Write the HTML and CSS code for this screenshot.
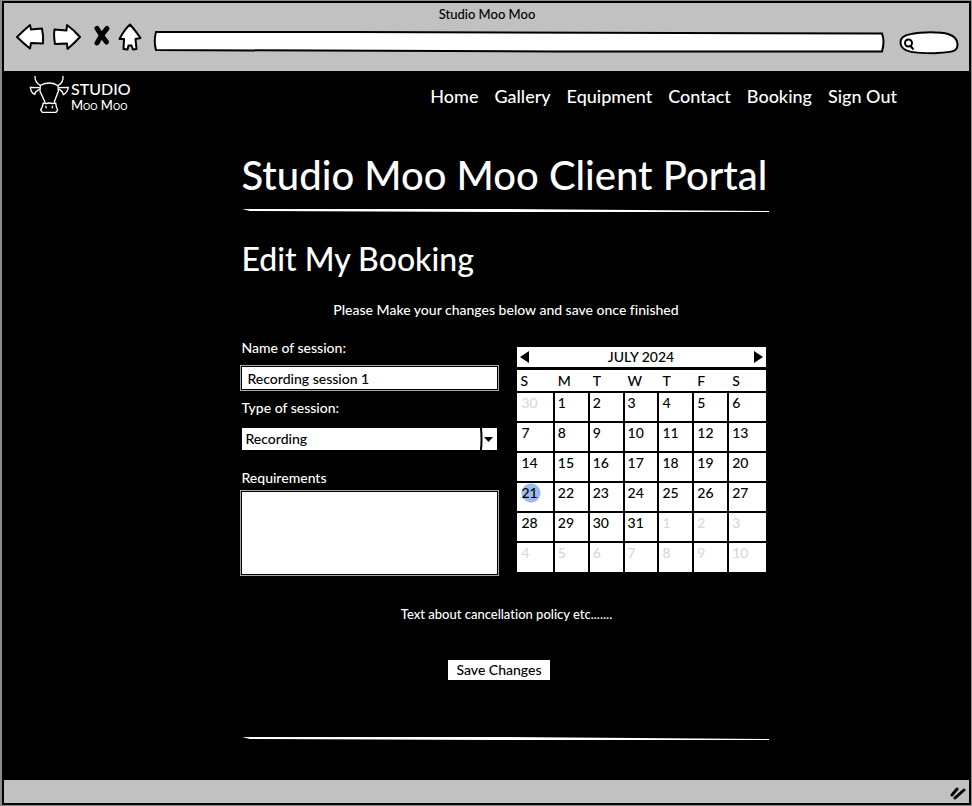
FILE: index.html
```html
<!DOCTYPE html>
<html lang="en">
<head>
<meta charset="utf-8">
<title>Studio Moo Moo</title>
<meta name="viewport" content="width=device-width, initial-scale=1">
<link rel="stylesheet" href="styles.css">
</head>
<body>
<div class="window">
  <header class="chrome">
    <p class="chrome-title">Studio Moo Moo</p>
    <div class="toolbar">
      <button class="tool" type="button" aria-label="Back">
        <svg width="30" height="28" viewBox="0 0 30 28"><path d="M2 14 Q8 8 15 2 L16 6.500 L27 5.500 Q28.500 12 28 20.500 L16 20 L15 25.500 Q8 20 2 14Z"/></svg>
      </button>
      <button class="tool tool-forward" type="button" aria-label="Forward">
        <svg width="30" height="28" viewBox="0 0 30 28"><path d="M28 14 Q22 7 15 2 L14.500 7.500 L2.500 6.500 Q1.500 12 3 21 L15 20.500 L15.500 26 Q22 20.500 28 14Z"/></svg>
      </button>
      <button class="tool tool-stop" type="button" aria-label="Stop">
        <svg width="18" height="28" viewBox="0 0 18 28"><path class="cross" d="M4 5.500 Q8 12 13.500 19 M14 5.500 Q8 12 4 20"/></svg>
      </button>
      <button class="tool tool-home" type="button" aria-label="Home page">
        <svg width="24" height="28" viewBox="0 0 24 28"><path d="M12 1.500 Q17 7 22.500 15 L17.500 16 L18.500 26 L15 26.500 L13.500 22.500 L10.500 22.500 L9.500 26.500 L5.500 26 L6 16 L1.500 16 Q6 7 12 1.500Z"/></svg>
      </button>
      <div class="address">
        <svg class="sketch" viewBox="0 0 732 22" preserveAspectRatio="none"><path d="M2 1 L200 1 L729 2.500 Q732 10 729 20.500 L400 20.500 L2 19 Q-0.500 10 2 1Z"/></svg>
        <input type="text" aria-label="Address">
      </div>
      <div class="search">
        <svg class="sketch" viewBox="0 0 60 26" preserveAspectRatio="none"><path d="M1.500 13 C1 6 8 2 27 1.500 C46 1 58 3 58.500 14 C59 23 53 23 36 24 C18 24 2 24 1.500 13Z"/></svg>
        <svg class="lens" width="12" height="13" viewBox="0 0 12 13"><circle cx="5.500" cy="5" r="3.500"/><path d="M7.500 8 L10.500 11.500"/></svg>
        <input type="search" aria-label="Search">
      </div>
    </div>
  </header>

  <div class="page">
    <div class="topbar">
      <a class="logo" href="#">
        <svg class="cow" width="42" height="40" viewBox="84 222 126 120" aria-hidden="true">
          <path d="M105 228 Q104 248 121 256 Q135 249 149 249 Q163 249 174 257 Q191 248 189 228"/>
          <path d="M119 263 L91 262 Q93 279 104 283 L107 276 L119 267 M176 263 L205 262 Q202 278 190 284 L187 276 L177 267"/>
          <path d="M121 256 L120 274 L136 308 M174 257 L175 274 L162 308"/>
          <path d="M138 311 L130 309 Q127 323 122 330 L127 337 L168 337 L173 330 Q168 321 167 309 L159 311 Q148 307 138 311Z"/>
          <path d="M137 318 L139 325 M158 318 L156 325"/>
        </svg>
        <span class="wordmark"><span class="word-top">STUDIO</span><span class="word-bottom">Moo Moo</span></span>
      </a>
      <nav class="nav">
        <a href="#">Home</a>
        <a href="#">Gallery</a>
        <a href="#">Equipment</a>
        <a href="#">Contact</a>
        <a href="#">Booking</a>
        <a href="#">Sign Out</a>
      </nav>
    </div>

    <main class="content">
      <h1>Studio Moo Moo Client Portal</h1>
      <svg class="rule" viewBox="0 0 527 5" preserveAspectRatio="none" aria-hidden="true"><path d="M0 1 L260 1 L527 3 L527 4 L250 4 L8 3Z"/></svg>
      <h2>Edit My Booking</h2>
      <p class="intro">Please Make your changes below and save once finished</p>

      <form>
        <div class="columns">
          <div class="fields">
            <label for="name">Name of session:</label>
            <input class="box" id="name" type="text" value="Recording session 1">
            <label for="type">Type of session:</label>
            <div class="picker">
              <select id="type"><option>Recording</option></select>
              <svg width="16" height="22" viewBox="0 0 16 22" aria-hidden="true"><path class="divider" d="M1 0 Q2 11 1 22"/><path d="M4 9 L13 9 L8.500 14Z"/></svg>
            </div>
            <label for="notes">Requirements</label>
            <textarea class="box" id="notes"></textarea>
          </div>

          <section class="calendar" aria-label="Booking date">
            <div class="month">
              <button type="button" aria-label="Previous month"><svg width="10" height="12" viewBox="0 0 10 12"><path d="M10 0 V12 L1 6Z"/></svg></button>
              <span>JULY 2024</span>
              <button type="button" aria-label="Next month"><svg width="10" height="12" viewBox="0 0 10 12"><path d="M0 0 V12 L9 6Z"/></svg></button>
            </div>
            <table>
              <thead><tr><th>S</th><th>M</th><th>T</th><th>W</th><th>T</th><th>F</th><th>S</th></tr></thead>
              <tbody>
                <tr><td class="out">30</td><td>1</td><td>2</td><td>3</td><td>4</td><td>5</td><td>6</td></tr>
                <tr><td>7</td><td>8</td><td>9</td><td>10</td><td>11</td><td>12</td><td>13</td></tr>
                <tr><td>14</td><td>15</td><td>16</td><td>17</td><td>18</td><td>19</td><td>20</td></tr>
                <tr><td class="today">21</td><td>22</td><td>23</td><td>24</td><td>25</td><td>26</td><td>27</td></tr>
                <tr><td>28</td><td>29</td><td>30</td><td>31</td><td class="out">1</td><td class="out">2</td><td class="out">3</td></tr>
                <tr><td class="out">4</td><td class="out">5</td><td class="out">6</td><td class="out">7</td><td class="out">8</td><td class="out">9</td><td class="out">10</td></tr>
              </tbody>
            </table>
          </section>
        </div>
        <p class="policy">Text about cancellation policy etc.......</p>
        <div class="actions">
          <button class="save" type="submit">Save Changes</button>
        </div>
      </form>
      <svg class="rule" viewBox="0 0 527 5" preserveAspectRatio="none" aria-hidden="true"><path d="M0 1 L260 1 L527 3 L527 4 L250 4 L8 3Z"/></svg>
    </main>
  </div>

  <footer class="statusbar">
    <svg width="18" height="14" viewBox="0 0 18 14" aria-hidden="true"><path d="M3 9 L8 3 M6 12 L15 4"/></svg>
  </footer>
</div>
</body>
</html>
```

FILE: styles.css
```css
* {
  box-sizing: border-box;
}

body {
  margin: 0;
  min-height: 100vh;
  display: flex;
  padding: 1px 1px 1px 2px;
  background: #8c8c8c;
  color: #fff;
  font: 14px/18px Lato, "Liberation Sans", sans-serif;
  font-weight: 500;
  font-variant-ligatures: none;
}

h1, h2, p {
  margin: 0;
  font-weight: 500;
}

button, input, select, textarea {
  margin: 0;
  padding: 0;
  border: 0;
  border-radius: 0;
  background: none;
  color: #000;
  font: inherit;
}

svg {
  display: block;
}

a {
  color: inherit;
  text-decoration: none;
}

.window {
  flex: 1;
  display: flex;
  flex-direction: column;
  border: 2px solid #000;
  background: #000;
}

/* Browser chrome */
.chrome {
  height: 68px;
  padding: 2px 10px 0 11px;
  background: #c1c1c1;
  color: #000;
}

.chrome-title {
  font-size: 13px;
  text-align: center;
}

.toolbar {
  display: flex;
  align-items: flex-start;
}

.tool path {
  fill: #fff;
  stroke: #000;
  stroke-width: 2;
  stroke-linejoin: round;
}

.tool .cross {
  fill: none;
  stroke-width: 5;
  stroke-linecap: round;
}

.tool-forward {
  margin-left: 7px;
}

.tool-stop {
  margin-left: 11px;
}

.tool-home {
  margin-left: 7px;
}

.address,
.search {
  position: relative;
  margin-top: 8px;
}

.address {
  flex: 1;
  height: 22px;
  margin-left: 12px;
}

.search {
  width: 60px;
  height: 24px;
  margin-left: 14px;
}

.address input,
.search input {
  position: relative;
  width: 100%;
  height: 100%;
  padding: 0 8px;
}

.search input {
  padding-left: 18px;
}

.sketch {
  position: absolute;
  inset: 0;
  width: 100%;
  height: 100%;
  overflow: visible;
}

.sketch path {
  fill: #fff;
  stroke: #000;
  stroke-width: 2;
  vector-effect: non-scaling-stroke;
}

.lens {
  position: absolute;
  left: 4px;
  top: 7px;
  fill: none;
  stroke: #000;
  stroke-width: 2;
}

/* Site header */
.page {
  flex: 1;
  padding-bottom: 32px;
}

.topbar {
  display: flex;
  justify-content: space-between;
  padding: 3px 72px 0 24px;
}

.logo {
  display: flex;
}

.cow {
  fill: none;
  stroke: #fff;
  stroke-width: 4;
}

.wordmark {
  display: flex;
  flex-direction: column;
  padding: 6px 0 0 1px;
}

.word-top {
  font-size: 16px;
  line-height: 18px;
}

.word-bottom {
  font-size: 13px;
  line-height: 14px;
  font-variant-caps: small-caps;
}

.nav {
  display: flex;
  gap: 16px;
  padding-top: 10px;
  font-size: 18px;
  line-height: 24px;
}

/* Portal content */
.content {
  width: 527px;
  max-width: 100%;
  margin: 0 auto;
}

.content h1 {
  margin-top: 37px;
  font-size: 40px;
  line-height: 48px;
  white-space: nowrap;
}

.rule {
  width: 100%;
  height: 5px;
  margin-top: 9px;
  fill: #fff;
}

.content h2 {
  margin-top: 24px;
  font-size: 32px;
  line-height: 44px;
}

.intro {
  margin-top: 20px;
  padding-left: 2px;
  text-align: center;
}

.columns {
  display: grid;
  grid-template-columns: 255fr 249fr;
  gap: 20px;
  margin-top: 20px;
  padding-right: 3px;
}

.fields {
  display: flex;
  flex-direction: column;
}

.box {
  background: #fff;
  outline: 1px solid #aaa;
  outline-offset: 1px;
}

input.box {
  height: 22px;
  margin: 10px 0;
  padding: 0 6px;
}

textarea.box {
  height: 82px;
  margin-top: 5px;
  padding: 4px 6px;
  resize: none;
}

.picker {
  position: relative;
  height: 22px;
  margin: 11px 0 19px;
}

.picker select {
  display: block;
  width: 100%;
  height: 100%;
  padding: 0 20px 0 4px;
  background: #fff;
  appearance: none;
}

.picker svg {
  position: absolute;
  top: 0;
  right: 1px;
  pointer-events: none;
}

.picker .divider {
  fill: none;
  stroke: #000;
  stroke-width: 2;
}

/* Calendar */
.calendar {
  margin-top: 8px;
  color: #000;
}

.month {
  display: flex;
  justify-content: space-between;
  align-items: center;
  height: 20px;
  padding: 0 2px;
  background: #fff;
}

.calendar table {
  width: 100%;
  margin-top: 3px;
  border-collapse: collapse;
  table-layout: fixed;
  background: #fff;
}

.calendar th {
  width: 14%;
  height: 22px;
  padding: 0 4px;
  text-align: left;
  font-weight: 500;
}

.calendar th:first-child,
.calendar th:last-child {
  width: 15%;
}

.calendar td {
  height: 30px;
  padding: 1px 3px;
  border-top: 2px solid #000;
  border-left: 2px solid #000;
  vertical-align: top;
}

.calendar td:first-child {
  padding-left: 5px;
  border-left: 0;
}

.calendar .out {
  color: #d9d9d9;
}

.calendar .today {
  background: radial-gradient(circle at 14px 10px, #9cbbea 9px, #fff 10px);
}

.policy {
  margin-top: 31px;
  padding-left: 3px;
  font-size: 13px;
  text-align: center;
}

.actions {
  display: flex;
  justify-content: center;
  padding: 37px 12px 47px 0;
}

.save {
  height: 20px;
  padding: 0 8px;
  background: #fff;
}

/* Status bar */
.statusbar {
  display: flex;
  justify-content: flex-end;
  height: 23px;
  padding: 6px 2px 0;
  background: #c1c1c1;
}

.statusbar path {
  fill: none;
  stroke: #000;
  stroke-width: 3;
  stroke-linecap: round;
}

@media (min-width: 620px) {
  .content {
    margin-left: calc(50% - 245px);
  }
}
```
